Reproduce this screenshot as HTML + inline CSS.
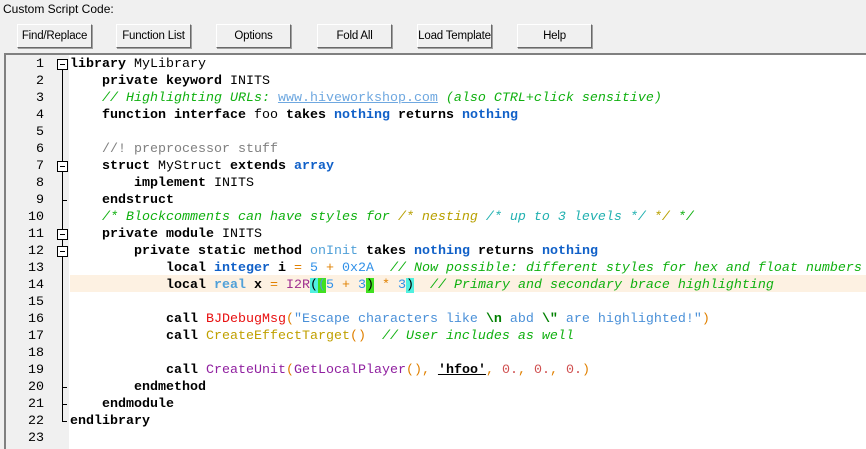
<!DOCTYPE html>
<html><head><meta charset="utf-8"><style>
body{margin:0;width:866px;height:447px;background:#f0f0f0;position:relative;overflow:hidden;font-family:"Liberation Sans",sans-serif}
.lbl{position:absolute;left:3px;top:2px;font-size:12px;color:#000}
.btn{position:absolute;top:24px;width:73px;height:22px;background:#f0f0f0;border:1px solid;border-color:#fff #696969 #696969 #fff;box-shadow:1px 1px 0 #a0a0a0;font-size:11.5px;text-align:center;line-height:22px;color:#000;white-space:nowrap;letter-spacing:-0.2px}
.ed{position:absolute;left:4px;top:53px;width:862px;height:394px;border-top:2px solid #808080;border-left:2px solid #808080;background:#fff}
.gut{position:absolute;left:0;top:0;width:63px;height:394px;background:#f0f0f0}
.ln{position:absolute;font-family:"Liberation Mono",monospace;font-size:13.33px;height:17px;line-height:17px;white-space:pre}
.num{left:0;width:38px;text-align:right;color:#000}
.code{left:64px;color:#000}
b{font-weight:bold}
.t{font-weight:bold;color:#1060c8}
.c{color:#10b010;font-style:italic}
.u{color:#6fa8e0;text-decoration:underline}
.pp{color:#808080}
.y{color:#b8a000;font-style:italic}
.cy{color:#20b0b0;font-style:italic}
.f{color:#50a0d8}
.o{color:#e08000}
.n{color:#3090e8}
.p{color:#a03090}
.s{color:#4a90d8}
.e{color:#008000;font-weight:bold}
.r{color:#e81010}
.g{color:#c0a000}
.pu{color:#9020a0}
.fl{color:#d05050}
.fold{position:absolute;left:51px;width:9px;height:9px;border:1px solid #000;background:#fff}
.fold:after{content:"";position:absolute;left:2px;top:4px;width:5px;height:1px;background:#000}
.vl{position:absolute;left:56px;width:1px;background:#000}
.tk{position:absolute;left:56px;width:5px;height:1px;background:#000}
</style></head><body>
<div class="lbl">Custom Script Code:</div>
<div class="btn" style="left:17px">Find/Replace</div>
<div class="btn" style="left:116px">Function List</div>
<div class="btn" style="left:216px">Options</div>
<div class="btn" style="left:317px">Fold All</div>
<div class="btn" style="left:417px">Load Template</div>
<div class="btn" style="left:517px">Help</div>
<div class="ed">
<div class="gut"></div>
<div style="position:absolute;left:64px;top:220px;width:798px;height:17px;background:#fdf1e2"></div>
<div class="vl" style="top:14px;height:352px"></div>
<div class="tk" style="top:145px"></div>
<div class="tk" style="top:332px"></div>
<div class="tk" style="top:349px"></div>
<div class="tk" style="top:366px"></div>
<div class="fold" style="top:4px"></div>
<div class="fold" style="top:106px"></div>
<div class="fold" style="top:174px"></div>
<div class="fold" style="top:191px"></div>

<div class="ln num" style="top:1px">1</div>
<div class="ln num" style="top:18px">2</div>
<div class="ln num" style="top:35px">3</div>
<div class="ln num" style="top:52px">4</div>
<div class="ln num" style="top:69px">5</div>
<div class="ln num" style="top:86px">6</div>
<div class="ln num" style="top:103px">7</div>
<div class="ln num" style="top:120px">8</div>
<div class="ln num" style="top:137px">9</div>
<div class="ln num" style="top:154px">10</div>
<div class="ln num" style="top:171px">11</div>
<div class="ln num" style="top:188px">12</div>
<div class="ln num" style="top:205px">13</div>
<div class="ln num" style="top:222px">14</div>
<div class="ln num" style="top:239px">15</div>
<div class="ln num" style="top:256px">16</div>
<div class="ln num" style="top:273px">17</div>
<div class="ln num" style="top:290px">18</div>
<div class="ln num" style="top:307px">19</div>
<div class="ln num" style="top:324px">20</div>
<div class="ln num" style="top:341px">21</div>
<div class="ln num" style="top:358px">22</div>
<div class="ln num" style="top:375px">23</div>

<div class="ln code" style="top:1px"><b>library</b> MyLibrary</div>
<div class="ln code" style="top:18px">    <b>private keyword</b> INITS</div>
<div class="ln code" style="top:35px">    <span class="c">// Highlighting URLs: </span><span class="u">www.hiveworkshop.com</span><span class="c"> (also CTRL+click sensitive)</span></div>
<div class="ln code" style="top:52px">    <b>function interface</b> foo <b>takes</b> <span class="t">nothing</span> <b>returns</b> <span class="t">nothing</span></div>
<div class="ln code" style="top:86px">    <span class="pp">//! preprocessor stuff</span></div>
<div class="ln code" style="top:103px">    <b>struct</b> MyStruct <b>extends</b> <span class="t">array</span></div>
<div class="ln code" style="top:120px">        <b>implement</b> INITS</div>
<div class="ln code" style="top:137px">    <b>endstruct</b></div>
<div class="ln code" style="top:154px">    <span class="c">/* Blockcomments can have styles for </span><span class="y">/* nesting </span><span class="cy">/* up to 3 levels */</span><span class="y"> */</span><span class="c"> */</span></div>
<div class="ln code" style="top:171px">    <b>private module</b> INITS</div>
<div class="ln code" style="top:188px">        <b>private static method</b> <span class="f">onInit</span> <b>takes</b> <span class="t">nothing</span> <b>returns</b> <span class="t">nothing</span></div>
<div class="ln code" style="top:205px">            <b>local</b> <span class="t">integer</span> <b>i</b> <span class="o">=</span> <span class="n">5</span> <span class="o">+</span> <span class="n">0x2A</span>  <span class="c">// Now possible: different styles for hex and float numbers</span></div>
<div class="ln code" style="top:222px">            <b>local</b> <span class="f" style="font-weight:bold">real</span> <b>x</b> <span class="o">=</span> <span class="p">I2R</span><span style="background:#50f0e0">(</span><span style="background:#40e020;color:#50a0d8">(</span><span class="n">5</span> <span class="o">+</span> <span class="n">3</span><span style="background:#40e020">)</span> <span class="o">*</span> <span class="n">3</span><span style="background:#50f0e0">)</span>  <span class="c">// Primary and secondary brace highlighting</span></div>
<div class="ln code" style="top:256px">            <b>call</b> <span class="r">BJDebugMsg</span><span class="o">(</span><span class="s">"Escape characters like </span><span class="e">\n</span><span class="s"> abd </span><span class="e">\"</span><span class="s"> are highlighted!"</span><span class="o">)</span></div>
<div class="ln code" style="top:273px">            <b>call</b> <span class="g">CreateEffectTarget</span><span class="o">()</span>  <span class="c">// User includes as well</span></div>
<div class="ln code" style="top:307px">            <b>call</b> <span class="pu">CreateUnit</span><span class="o">(</span><span class="pu">GetLocalPlayer</span><span class="o">(),</span> <b style="text-decoration:underline">'hfoo'</b><span class="o">,</span> <span class="fl">0.</span><span class="o">,</span> <span class="fl">0.</span><span class="o">,</span> <span class="fl">0.</span><span class="o">)</span></div>
<div class="ln code" style="top:324px">        <b>endmethod</b></div>
<div class="ln code" style="top:341px">    <b>endmodule</b></div>
<div class="ln code" style="top:358px"><b>endlibrary</b></div>
</div>
</body></html>
